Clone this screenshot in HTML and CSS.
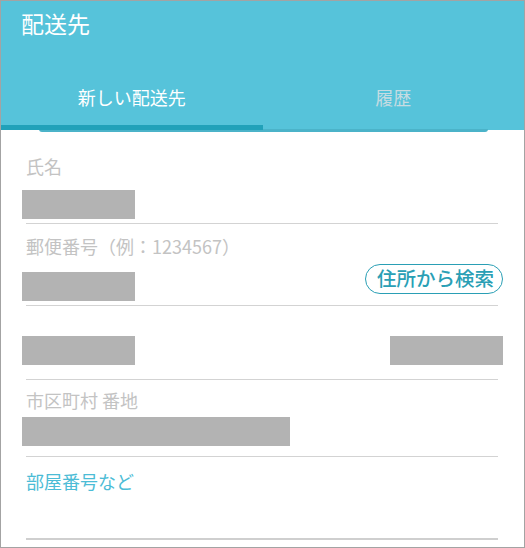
FILE: index.html
```html
<!DOCTYPE html>
<html lang="ja">

<head>
    <meta charset="UTF-8">
    <meta name="viewport" content="width=device-width, initial-scale=1">
    <title>配送先</title>
    <link rel="stylesheet" href="styles.css">
</head>

<body>
    <div class="frame">
        <div class="header">
            <div class="title">配送先</div>
            <ul class="tabs">
                <li class="active">新しい配送先</li>
                <li>履歴</li>
            </ul>
        </div>
        <div class="edge"></div>
        <div class="form">
            <div class="field f-name">
                <div class="label">氏名</div>
                <div class="row"><span class="mask"></span></div>
            </div>
            <div class="field f-zip">
                <div class="label">郵便番号（例：1234567）</div>
                <div class="row">
                    <span class="mask"></span>
                    <span class="search">住所から検索</span>
                </div>
            </div>
            <div class="field f-pref">
                <div class="row">
                    <span class="mask"></span>
                    <span class="mask"></span>
                </div>
            </div>
            <div class="field f-city">
                <div class="label">市区町村 番地</div>
                <div class="row"><span class="mask wide"></span></div>
            </div>
            <div class="field f-room">
                <div class="label focus">部屋番号など</div>
            </div>
        </div>
    </div>
</body>

</html>
```

FILE: styles.css
```css
* {
    margin: 0;
    padding: 0;
    box-sizing: border-box;
}

ul {
    list-style: none;
}

body {
    font-family: "Noto Sans CJK JP", "Noto Sans", sans-serif;
    background-color: #fff;
}

.frame {
    width: 525px;
    height: 548px;
    border: 1px solid #a3a3a3;
    overflow: hidden;
}

.header {
    background-color: #56c3da;
}

.header .title {
    height: 56px;
    padding-left: 20px;
    color: #fff;
    font-size: 23px;
    line-height: 44px;
}

.tabs {
    display: flex;
}

.tabs li {
    flex: 1;
    height: 73px;
    padding-top: 12px;
    color: #c6dce2;
    font-size: 18px;
    line-height: 56px;
    text-align: center;
    border-bottom: 5px solid transparent;
}

.tabs li.active {
    color: #fff;
    border-bottom-color: #21a1b9;
}

.edge {
    height: 3px;
    margin: -1px 36px 0 38px;
    background-color: #4bb3c9;
    border-radius: 0 0 10px 10px;
}

.form {
    padding: 0 26px 0 25px;
}

.field {
    border-bottom: 1px solid #d3d3d3;
}

.label {
    color: #c3c3c3;
    font-size: 18px;
    line-height: 24px;
}

.label.focus {
    color: #4cbcd6;
}

.row {
    display: flex;
    justify-content: space-between;
    align-items: flex-end;
    margin-left: -4px;
    margin-right: -5px;
}

.mask {
    display: block;
    width: 113px;
    height: 29px;
    background-color: #b3b3b3;
}

.mask.wide {
    width: 268px;
}

.search {
    height: 30px;
    margin-bottom: 7px;
    padding: 0 8px 0 11px;
    border: 1.5px solid #2a9fb5;
    border-radius: 15px;
    color: #2a9fb5;
    font-size: 19.5px;
    font-weight: 500;
    line-height: 26px;
}

.f-name {
    padding: 22px 0 4px;
}

.f-name .row {
    margin-top: 12px;
}

.f-zip {
    padding: 10px 0 4px;
}

.f-zip .row {
    margin-top: 6px;
}

.f-pref {
    padding: 30px 0 14px;
}

.f-city {
    padding: 8px 0 10px;
}

.f-city .row {
    margin-top: 5px;
}

.f-room {
    padding: 12px 0 45px;
    border-bottom: 2px solid #cfcfcf;
}
```
